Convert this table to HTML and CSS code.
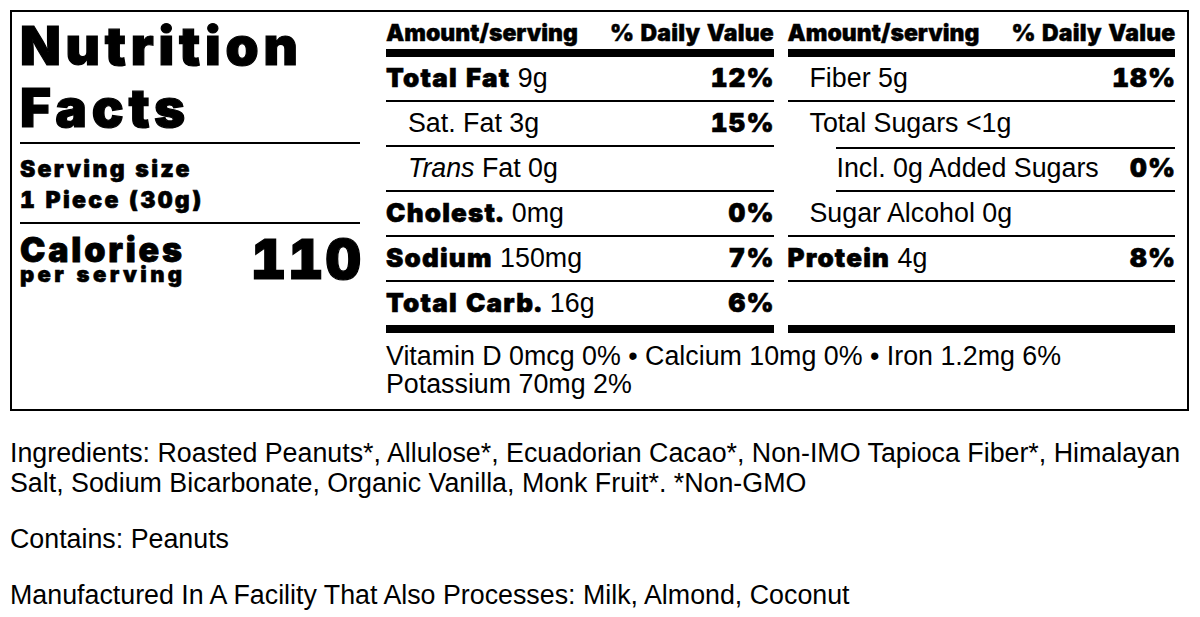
FILE: index.html
```html
<!DOCTYPE html>
<html lang="en">
<head>
<meta charset="utf-8">
<title>Nutrition Facts</title>
<link rel="stylesheet" href="styles.css">
</head>
<body>
<section class="label">
  <div class="side">
    <h1 class="title">Nutrition<br>Facts</h1>
    <div class="serving">
      <div>Serving size</div>
      <div>1 Piece (30g)</div>
    </div>
    <div class="calories">
      <div class="cal-label">
        <span class="cal-big">Calories</span>
        <span class="cal-small">per serving</span>
      </div>
      <div class="cal-num">110</div>
    </div>
  </div>
  <div class="main">
    <div class="panels">
      <div class="panel">
        <div class="head"><span>Amount/serving</span><span class="dv">% Daily Value</span></div>
        <div class="row"><span><b>Total Fat</b> 9g</span><b class="pct">12%</b></div>
        <div class="row sub"><span>Sat. Fat 3g</span><b class="pct">15%</b></div>
        <div class="row sub"><span><i>Trans</i> Fat 0g</span></div>
        <div class="row"><span><b>Cholest.</b> 0mg</span><b class="pct">0%</b></div>
        <div class="row"><span><b>Sodium</b> 150mg</span><b class="pct">7%</b></div>
        <div class="row last"><span><b>Total Carb.</b> 16g</span><b class="pct">6%</b></div>
      </div>
      <div class="panel">
        <div class="head"><span>Amount/serving</span><span class="dv">% Daily Value</span></div>
        <div class="row sub"><span>Fiber 5g</span><b class="pct">18%</b></div>
        <div class="row sub open"><span>Total Sugars &lt;1g</span></div>
        <div class="row subsub"><span>Incl. 0g Added Sugars</span><b class="pct">0%</b></div>
        <div class="row sub"><span>Sugar Alcohol 0g</span></div>
        <div class="row"><span><b>Protein</b> 4g</span><b class="pct">8%</b></div>
        <div class="row last"></div>
      </div>
    </div>
    <p class="vitamins">Vitamin D 0mcg 0% &bull; Calcium 10mg 0% &bull; Iron 1.2mg 6%<br>Potassium 70mg 2%</p>
  </div>
</section>
<div class="notes">
  <p>Ingredients: Roasted Peanuts*, Allulose*, Ecuadorian Cacao*, Non-IMO Tapioca Fiber*, Himalayan Salt, Sodium Bicarbonate, Organic Vanilla, Monk Fruit*. *Non-GMO</p>
  <p>Contains: Peanuts</p>
  <p>Manufactured In A Facility That Also Processes: Milk, Almond, Coconut</p>
</div>
</body>
</html>
```

FILE: styles.css
```css
html, body {
  margin: 0;
  background: #fff;
}
body {
  padding: 10px;
  font-family: "Liberation Sans", Arial, sans-serif;
  font-size: 26.8px;
  color: #000;
}
b, .title, .serving, .calories, .head {
  font-family: "Inter", "Liberation Sans", sans-serif;
  font-weight: 900;
  font-variant-numeric: tabular-nums;
}
.label {
  box-sizing: border-box;
  width: 1179px;
  height: 401px;
  border: 2px solid #000;
  padding: 0 12px 0 8px;
  display: flex;
  gap: 26px;
}
.side {
  width: 340px;
  flex: none;
}
.title {
  margin: 3px 0 0;
  font-size: 53px;
  line-height: 62px;
  letter-spacing: 4.8px;
  -webkit-text-stroke: 1.2px #000;
  padding-bottom: 3px;
  border-bottom: 2px solid #000;
}
.serving {
  font-size: 23px;
  line-height: 31px;
  letter-spacing: 2.3px;
  -webkit-text-stroke: 0.6px #000;
  padding: 10px 0 6px;
  border-bottom: 2px solid #000;
}
.calories {
  display: flex;
  justify-content: space-between;
  align-items: flex-start;
  padding-top: 8px;
}
.cal-label {
  display: flex;
  flex-direction: column;
  padding-top: 3px;
}
.cal-big {
  font-size: 34px;
  line-height: 29px;
  letter-spacing: 2.8px;
  -webkit-text-stroke: 0.8px #000;
}
.cal-small {
  font-size: 22px;
  line-height: 21px;
  letter-spacing: 3.4px;
  -webkit-text-stroke: 0.6px #000;
}
.cal-num {
  font-size: 55px;
  line-height: 54px;
  letter-spacing: 2px;
  -webkit-text-stroke: 1.2px #000;
  margin-right: -3px;
}
.main {
  flex: 1;
  display: flex;
  flex-direction: column;
}
.panels {
  display: flex;
  gap: 14px;
}
.panel {
  flex: 1;
}
.head {
  box-sizing: border-box;
  height: 45px;
  display: flex;
  justify-content: space-between;
  align-items: flex-end;
  font-size: 23px;
  line-height: 23px;
  -webkit-text-stroke: 0.4px #000;
  padding-bottom: 4px;
  border-bottom: 8px solid #000;
}
.head .dv {
  letter-spacing: 0.2px;
  margin-right: -0.5px;
}
.row {
  box-sizing: border-box;
  height: 45px;
  padding-top: 6px;
  display: flex;
  justify-content: space-between;
  align-items: baseline;
  line-height: 30px;
  border-bottom: 2px solid #000;
}
.row b {
  font-size: 26px;
  letter-spacing: 1.2px;
  -webkit-text-stroke: 0.6px #000;
}
.row .pct {
  margin-right: -1.4px;
}
.row.sub > span:first-child {
  padding-left: 22px;
}
.row.open {
  border-bottom: none;
}
.row.subsub {
  margin-left: 48px;
  border-top: 2px solid #000;
  height: 45px;
  padding-top: 4px;
}
.row.subsub > span:first-child {
  padding-left: 1px;
}
.row.last {
  border-bottom: 8px solid #000;
  height: 51px;
}
.vitamins {
  margin: 9px 0 0;
  line-height: 28px;
}
.notes p {
  margin: 26px 0 0;
  line-height: 30px;
  width: 1185px;
}
.notes p:first-child {
  margin-top: 27px;
}
```
